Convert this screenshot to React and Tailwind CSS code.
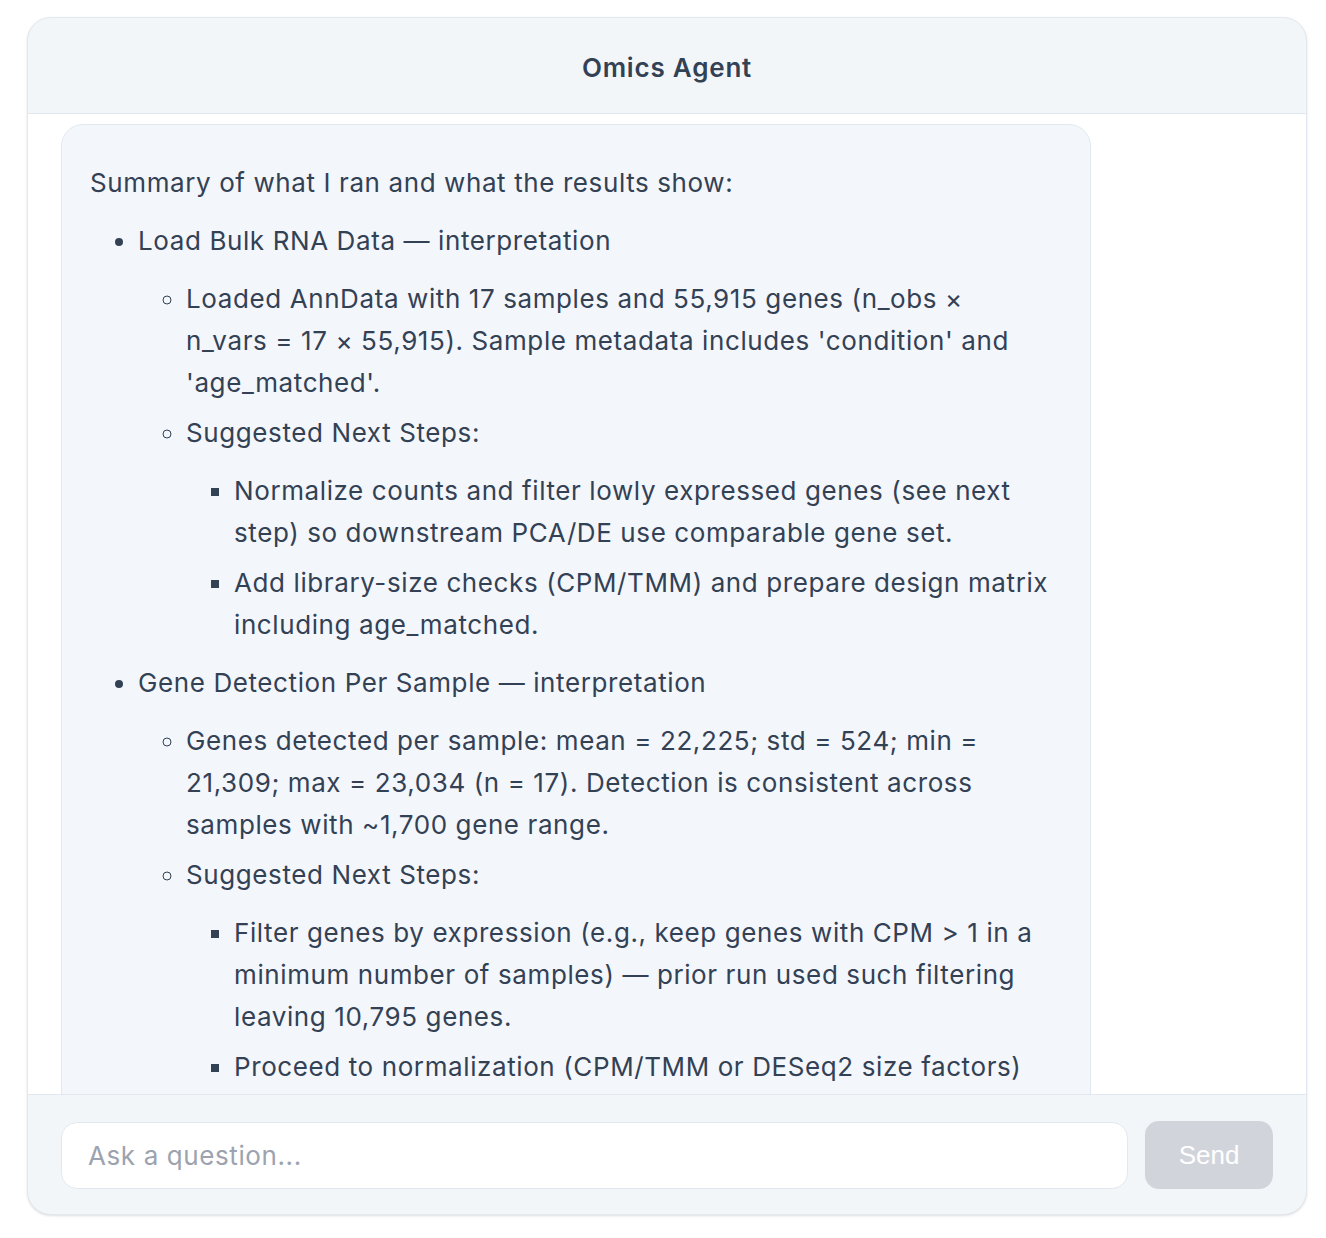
import React from "react";

const font = { fontFamily: "Inter, 'Noto Sans', sans-serif" };

const sections = [
  {
    title: "Load Bulk RNA Data — interpretation",
    summary:
      "Loaded AnnData with 17 samples and 55,915 genes (n_obs × n_vars\u00a0= 17 × 55,915). Sample metadata includes 'condition' and 'age_matched'.",
    steps: [
      "Normalize counts and filter lowly expressed genes (see next step) so downstream PCA/DE use comparable gene set.",
      "Add library-size checks (CPM/TMM) and prepare design matrix including age_matched.",
    ],
  },
  {
    title: "Gene Detection Per Sample — interpretation",
    summary:
      "Genes detected per sample: mean = 22,225; std = 524; min = 21,309; max = 23,034 (n = 17). Detection is consistent across samples with ~1,700 gene range.",
    steps: [
      "Filter genes by expression (e.g., keep genes with CPM > 1 in a minimum number of samples) — prior run used such filtering leaving 10,795 genes.",
      "Proceed to normalization (CPM/TMM or DESeq2 size factors) before PCA and differential expression.",
    ],
  },
];

export default function App() {
  return (
    <div className="min-h-screen bg-white pt-[17px] pl-[27px]" style={font}>
      <div className="w-[1280px] h-[1198px] flex flex-col rounded-[24px] border border-[#e2e8f0] bg-[#f3f6f9] overflow-hidden shadow-sm">
        <div className="h-[96px] shrink-0 flex items-center justify-center border-b border-[#e2e8f0] pt-[3px]">
          <h1 className="text-[26px] font-semibold tracking-[0.8px] text-[#334155]">Omics Agent</h1>
        </div>

        <div className="flex-1 min-h-0 overflow-hidden bg-white px-[33px] pt-[10px]">
          <div className="w-[1030px] rounded-[22px] border border-[#e2e8f0] bg-[#f3f6fa] px-[28px] pt-[37px] pb-8 text-[26px] leading-[42px] tracking-[0.6px] text-[#334155]">
            <p>Summary of what I ran and what the results show:</p>
            <ul className="list-disc pl-12 mt-4">
              {sections.map((s, i) => (
                <li key={i} className={i > 0 ? "mt-2" : ""}>
                  {s.title}
                  <ul className="list-[circle] pl-12 my-4">
                    <li>{s.summary}</li>
                    <li className="mt-2">
                      Suggested Next Steps:
                      <ul className="list-[square] pl-12 my-4">
                        {s.steps.map((t, j) => (
                          <li key={j} className={j > 0 ? "mt-2" : ""}>
                            {t}
                          </li>
                        ))}
                      </ul>
                    </li>
                  </ul>
                </li>
              ))}
            </ul>
          </div>
        </div>

        <div className="shrink-0 border-t border-[#e2e8f0] px-[33px] pt-[26px] pb-[25px] flex items-center gap-[17px]">
          <input
            placeholder="Ask a question..."
            className="flex-1 h-[67px] rounded-[16px] border border-[#e2e8f0] bg-white px-[26px] text-[26px] tracking-[0.6px] text-[#334155] placeholder:text-[#9ca3af] outline-none"
            style={font}
          />
          <button
            disabled
            className="w-[128px] h-[68px] rounded-[14px] bg-[#d1d5db] text-white text-[26px]"
            style={{ fontFamily: "'Liberation Sans', Arial, sans-serif" }}
          >
            Send
          </button>
        </div>
      </div>
    </div>
  );
}
